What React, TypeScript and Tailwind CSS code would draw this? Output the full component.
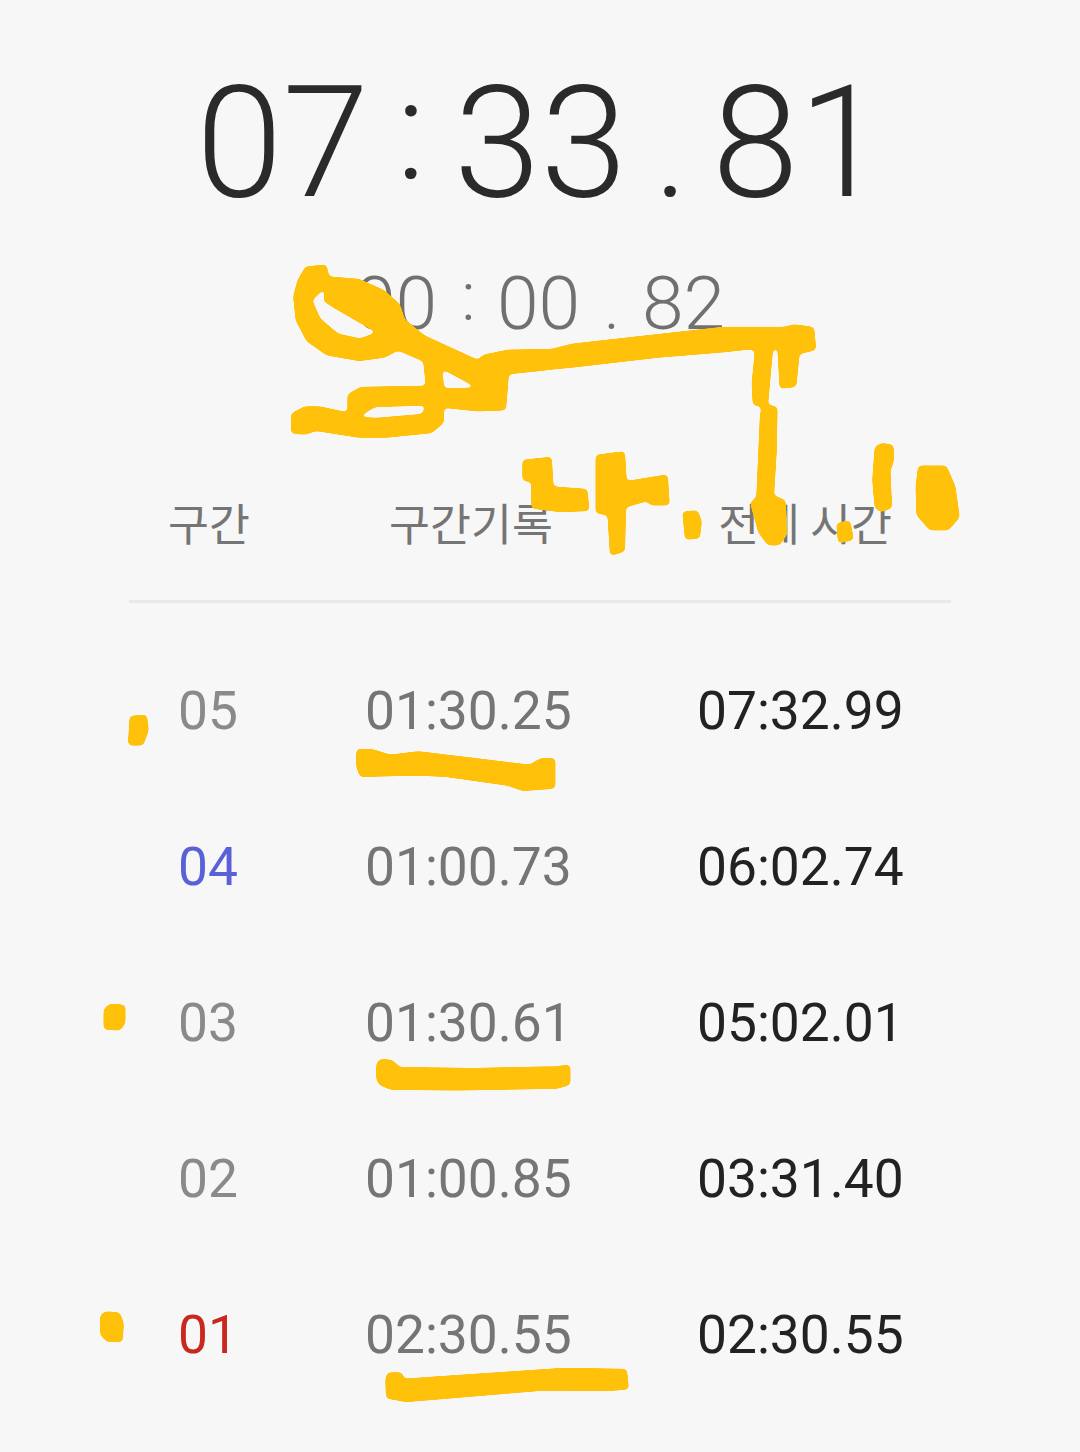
import React from 'react';

const laps = [
  { no: '05', lap: '01:30.25', total: '07:32.99', color: 'text-[#8a8a8a]' },
  { no: '04', lap: '01:00.73', total: '06:02.74', color: 'text-[#5a61d8]' },
  { no: '03', lap: '01:30.61', total: '05:02.01', color: 'text-[#8a8a8a]' },
  { no: '02', lap: '01:00.85', total: '03:31.40', color: 'text-[#8a8a8a]' },
  { no: '01', lap: '02:30.55', total: '02:30.55', color: 'text-[#c9281f]' },
];

// yellow marker scribbles drawn over the screenshot
const Scribbles: React.FC = () => (
  <svg
    className="absolute left-0 top-0 pointer-events-none"
    width="1080"
    height="1452"
    fill="#ffc10a"
    stroke="#ffc10a"
    strokeWidth="11"
    strokeLinejoin="round"
  >
    <defs>
      {/* blur + threshold rounds off the corners like a marker tip */}
      <filter id="marker" x="0" y="0" width="1080" height="1452" filterUnits="userSpaceOnUse" colorInterpolationFilters="sRGB">
        <feGaussianBlur stdDeviation="2" />
        <feColorMatrix values="1 0 0 0 0  0 1 0 0 0  0 0 1 0 0  0 0 0 10 -4.5" />
      </filter>
    </defs>
    <g filter="url(#marker)">
      <g transform="translate(280 250) scale(0.3571 0.3333)">
        <path
          fillRule="evenodd"
          d="M75,54 L126,49 L133,84 L220,92 L288,124 L331,165 L345,211 L402,261 L555,336 L572,319 L640,304 L760,302 L820,286 L1020,262 L1240,236 L1410,236 L1440,228 L1491,236 L1496,296 L1450,308 L1441,406 L1404,411 L1398,291 L1376,291 L1361,469 L1388,474 L1386,600 L1378,739 L1411,754 L1416,850 L1396,881 L1369,881 L1344,845 L1322,760 L1339,744 L1349,500 L1354,466 L1329,461 L1326,400 L1336,291 L1240,302 L1060,318 L830,346 L636,368 L628,476 L555,479 L454,468 L454,516 L423,544 L300,558 L220,558 L100,538 L70,549 L36,546 L36,494 L70,474 L110,474 L194,494 L194,436 L227,416 L414,412 L406,331 L330,296 L292,318 L220,328 L132,311 L79,271 L49,210 L42,140 L54,92 Z
          M84,150 L134,98 L127,151 L156,171 L221,211 L282,248 L225,271 L161,256 L109,209 Z
          M448,348 L570,418 L455,420 Z
          M205,505 L265,466 L415,461 L402,497 L270,509 Z"
        />
        <path d="M684,634 L756,626 L761,714 L856,722 L861,778 L780,781 L709,771 L709,691 L684,688 Z" />
        <path d="M889,619 L961,609 L966,699 L1081,679 L1086,761 L1040,761 L1030,748 L964,768 L961,901 L929,911 L922,791 L889,786 Z" />
        <path d="M1132,789 L1166,786 L1176,815 L1171,861 L1139,864 Z" />
      </g>
      <g transform="translate(700 430) scale(0.3333)">
        <path d="M414,284 L446,276 L456,326 L419,334 Z" />
        <path d="M529,54 L545,44 L576,49 L576,95 L566,120 L571,231 L545,241 L529,231 L522,150 Z" />
        <path d="M659,112 L736,112 L761,170 L774,260 L743,296 L692,296 L654,253 L652,170 Z" />
      </g>
      <g transform="translate(90 660) scale(0.3333)">
        <path d="M124,172 L166,169 L171,210 L156,251 L119,251 Z" />
        <path d="M804,272 L844,272 L900,289 L985,279 L1110,294 L1320,319 L1354,299 L1391,299 L1391,381 L1300,388 L1250,371 L1070,346 L980,341 L814,346 L804,320 Z" />
      </g>
      <g transform="translate(90 990) scale(0.3333)">
        <path d="M46,59 L62,46 L101,49 L101,98 L88,116 L46,114 Z" />
        <path d="M864,222 L872,212 L903,214 L928,236 L1150,239 L1400,234 L1436,229 L1436,281 L1400,291 L1100,296 L902,294 L872,281 L864,268 Z" />
      </g>
      <g transform="translate(90 1300) scale(0.3507 0.3333)">
        <path d="M34,47 L47,39 L81,42 L91,70 L88,121 L52,121 L34,103 Z" />
        <path d="M847,237 L852,222 L886,222 L891,242 L990,234 L1350,209 L1526,212 L1531,264 L1470,268 L1300,266 L1020,291 L900,301 L849,291 Z" />
      </g>
    </g>
  </svg>
);

const App: React.FC = () => {
  return (
    <div className="relative w-[1080px] h-[1452px] overflow-hidden bg-[#f7f7f7] font-['Roboto','Noto_Sans_CJK_KR',sans-serif]">
      <div className="pt-[72px] pl-[196px] flex items-center h-[214px] text-[156px] leading-[188px] font-light text-[#2a2a2a]">
        <span className="w-[172px]">07</span>
        <span className="w-[86px] text-center text-[140px] mb-[27px]">:</span>
        <span className="w-[176px]">33</span>
        <span className="w-[82px] text-center text-[140px] mt-[10px]">.</span>
        <span>81</span>
      </div>

      <div className="mt-[42px] pl-[354px] flex items-center h-[94px] text-[75px] leading-[94px] font-light text-[#707070]">
        <span className="w-[86px]">00</span>
        <span className="w-[57px] text-center text-[68px] mb-[13px]">:</span>
        <span className="w-[85px]">00</span>
        <span className="w-[60px] text-center text-[68px] mt-[5px]">.</span>
        <span>82</span>
      </div>

      <div className="mt-[144px] mx-[129px] border-b-[3px] border-[#e9e9e9] h-[109px]">
        <div className="grid grid-cols-[160px_364px_1fr] text-[44.5px] leading-[56px] text-[#757575] font-['Noto_Sans_CJK_KR',sans-serif]">
          <span className="text-center">구간</span>
          <span className="text-center">구간기록</span>
          <span className="text-center pl-[6px]">전체 시간</span>
        </div>
      </div>

      <div className="pt-[30px] pl-[178px] flex flex-col">
        {laps.map((l) => (
          <div key={l.no} className="grid grid-cols-[187px_332px_1fr] h-[156px] items-center text-[53.3px] leading-[62px]">
            <span className={l.color}>{l.no}</span>
            <span className="text-[#757575]">{l.lap}</span>
            <span className="text-[#222222]">{l.total}</span>
          </div>
        ))}
      </div>

      <Scribbles />
    </div>
  );
};

export default App;
